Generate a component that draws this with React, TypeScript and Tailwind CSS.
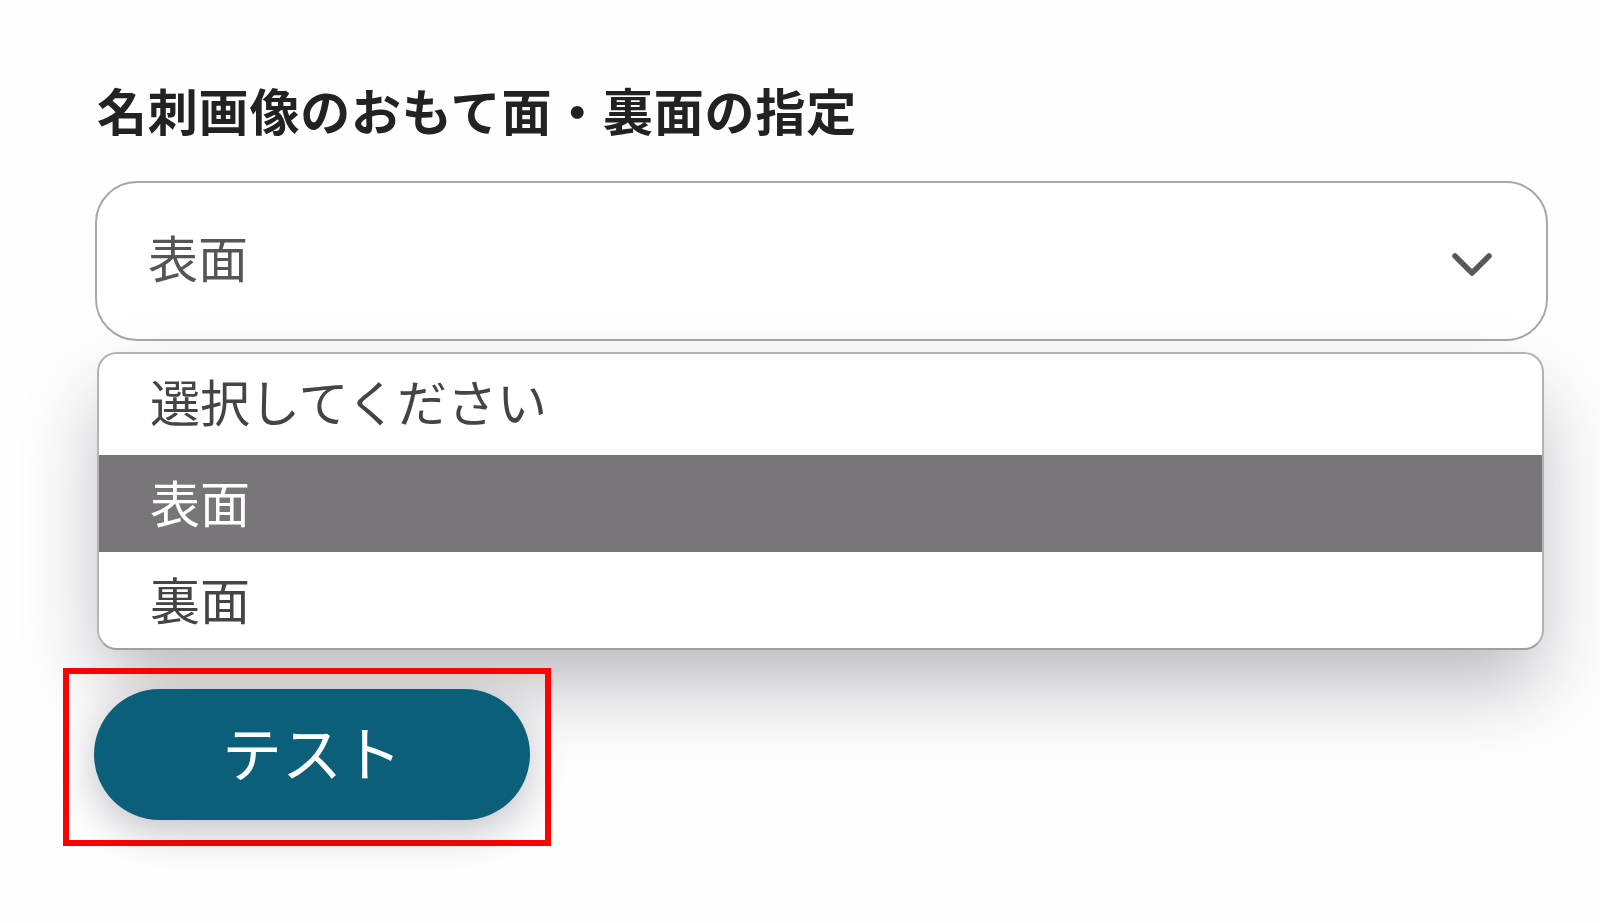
const font = { fontFamily: '"Noto Sans CJK JP", "Noto Sans", sans-serif' };

function Chevron() {
  return (
    <svg width="42" height="28" viewBox="0 0 42 28" fill="none" className="mt-[8px]">
      <path d="M4 5 L21 22 L38 5" stroke="#585858" strokeWidth="5.5" strokeLinecap="round" strokeLinejoin="round" />
    </svg>
  );
}

const options = [
  { label: "選択してください", h: "h-[101px] pb-[10px]" },
  { label: "表面", h: "h-[97px] pb-[6px]" },
  { label: "裏面", h: "h-[96px] pb-[4px]" },
];

export default function App() {
  const selected = 1;

  return (
    <div className="w-[1600px] h-[923px] overflow-hidden bg-[#fefefe]" style={font}>
      <div className="flex flex-col pl-[97px] pr-[52px] pt-[84px]">
        <h2 className="text-[50px] font-bold leading-none text-[#222222] tracking-[0.8px]">
          名刺画像のおもて面・裏面の指定
        </h2>

        <div className="mt-[47px] -ml-[2px] h-[160px] flex items-center justify-between rounded-[42px] border-2 border-[#a8a8a8] bg-white pl-[51px] pr-[53px]">
          <span className="text-[50px] leading-none text-[#555555] pb-[10px]">表面</span>
          <Chevron />
        </div>

        <div className="mt-[11px] mr-[4px] flex flex-col rounded-[20px] border-2 border-[#b3b3b3] border-b-[#a0a0a0] bg-white overflow-hidden shadow-[0_40px_80px_-6px_rgba(40,35,55,0.32)]">
          {options.map((opt, i) => (
            <div
              key={opt.label}
              className={
                i === selected
                  ? `${opt.h} flex items-center pl-[51px] bg-[#787679] text-white text-[50px] leading-none`
                  : `${opt.h} flex items-center pl-[51px] text-[#444444] text-[50px] leading-none`
              }
            >
              {opt.label}
            </div>
          ))}
        </div>

        <div className="mt-[18px] -ml-[34px] w-[488px] h-[178px] border-[6px] border-[#ff0000] pl-[25px] pt-[15px]">
          <button className="w-[436px] h-[131px] pb-[8px] rounded-full bg-[#0b5f79] text-white text-[60px] leading-none shadow-[0_12px_40px_rgba(40,40,60,0.28)]">
            テスト
          </button>
        </div>
      </div>
    </div>
  );
}
